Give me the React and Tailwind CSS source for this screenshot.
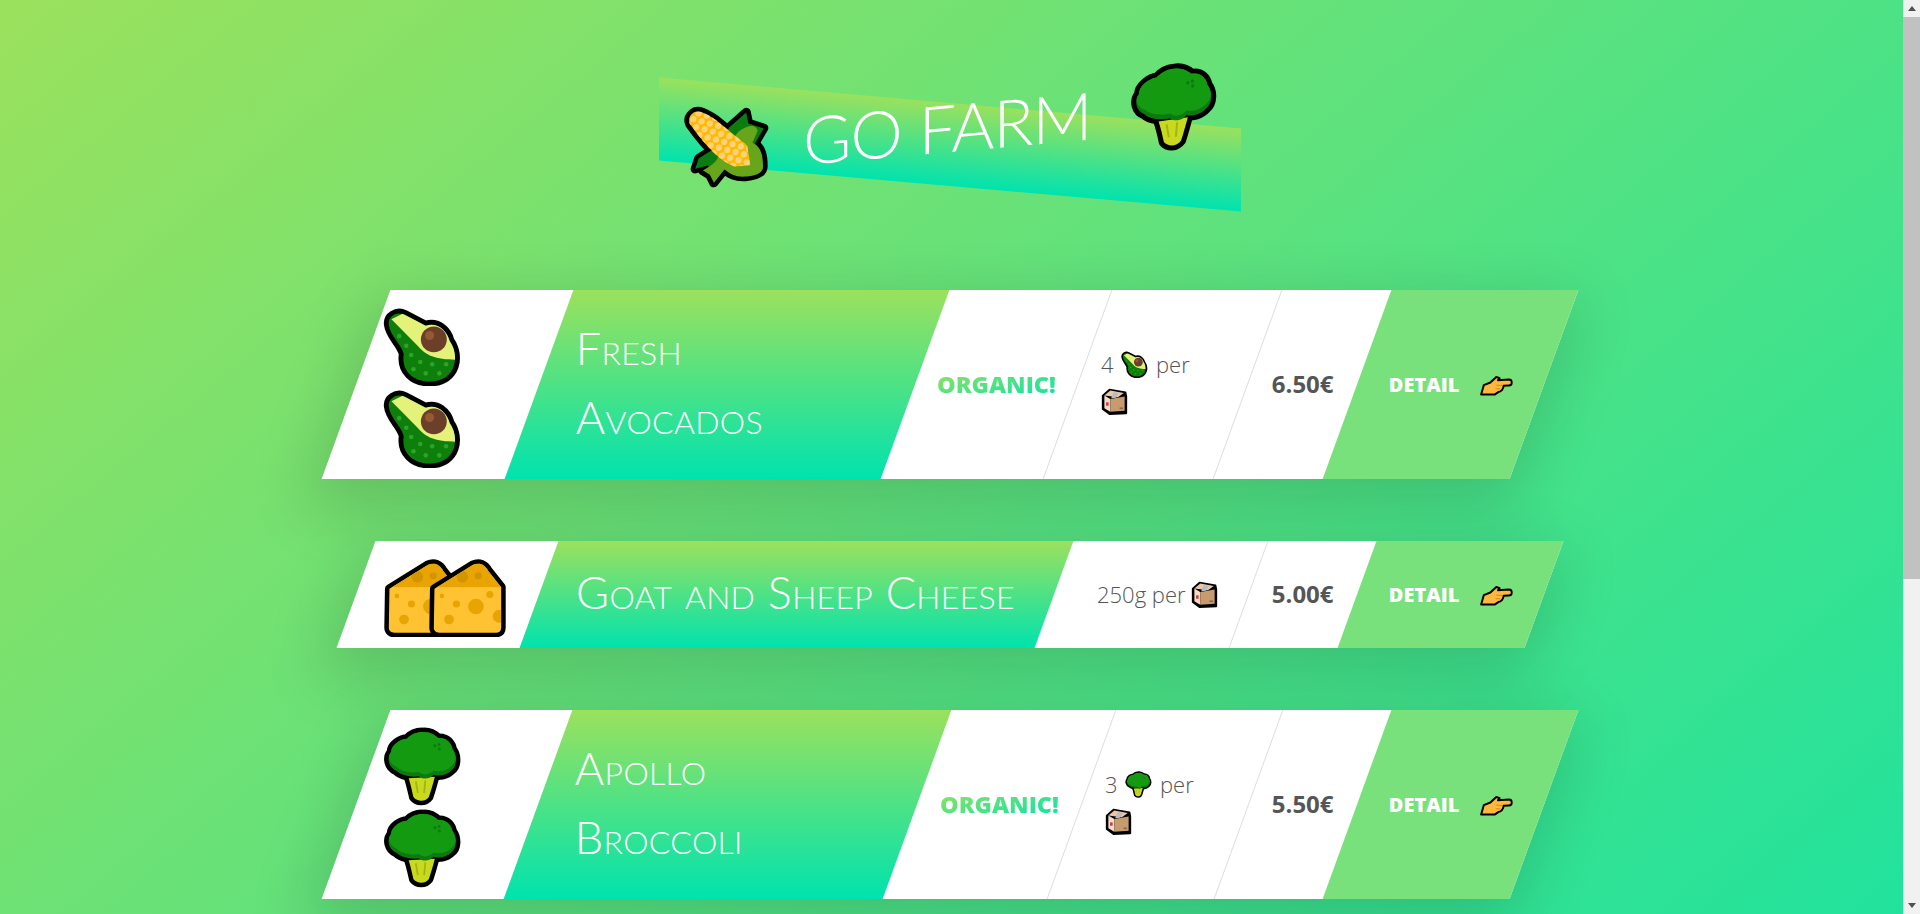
import React, { useId } from 'react';

function Avocado({ className }) {
  const id = useId();
  const shape = "M36,75 C32,50 60,32 85,44 L150,78 C185,65 215,92 224,125 C256,170 245,248 165,250 C110,252 74,215 82,165 C72,130 40,110 36,75 Z";
  return (
    <svg viewBox="18 20 244 244" className={className}>
      <clipPath id={id}><path d={shape} /></clipPath>
      <path d={shape} fill="#000" stroke="#000" strokeWidth="30" strokeLinejoin="round" />
      <path d={shape} fill="#0f7f0c" />
      <g clipPath={`url(#${id})`}>
        <path d="M44,58 L120,20 L260,60 L260,183 L245,183 C180,183 150,170 125,140 Z" fill="#e4f27a" />
        {[[68,110],[90,140],[105,168],[133,190],[170,197],[213,197],[112,212],[150,225],[192,225]].map(([x, y]) => (
          <circle key={x + '-' + y} cx={x} cy={y} r="7" fill="#2aa52a" />
        ))}
      </g>
      <circle cx="175" cy="120" r="40" fill="#6b3f2a" />
      <circle cx="162" cy="108" r="14" fill="#965a33" />
    </svg>
  );
}

function Corn({ className }) {
  const id = useId();
  const cob = "M46,92 C36,70 56,48 82,60 C95,66 110,76 125,88 L218,172 L228,232 L180,232 C140,215 95,165 46,92 Z";
  const dark = "M165,112 L215,72 L222,106 L268,125 L240,170 L120,250 L100,222 L62,228 L72,198 L120,172 Z";
  const light = "M192,128 C220,108 245,110 250,130 L234,165 C262,180 266,210 266,240 C266,262 240,265 215,265 C185,265 170,255 150,238 L118,275 L106,250 L85,235 C105,225 125,215 130,200 Z";
  const dots = [];
  for (let u = 0; u < 11; u++) {
    for (let v = -2; v <= 2; v++) {
      dots.push([56 + u * 17 + v * 16 + (u % 2 ? 8 : 0), 78 + u * 17 - v * 16 + (u % 2 ? -8 : 0)]);
    }
  }
  return (
    <svg viewBox="22 38 265 265" className={className}>
      <clipPath id={id}><path d={cob} /></clipPath>
      {[dark, light, cob].map((d) => (
        <path key={d} d={d} fill="#000" stroke="#000" strokeWidth="28" strokeLinejoin="round" />
      ))}
      <path d={dark} fill="#0b7c10" />
      <path d={light} fill="#67a51b" />
      <path d={cob} fill="#ffb900" />
      <g clipPath={`url(#${id})`}>
        {dots.map(([x, y]) => (
          <circle key={x + '-' + y} cx={x} cy={y} r="9.5" fill="#ffd27a" />
        ))}
      </g>
    </svg>
  );
}

function Broccoli({ className }) {
  const id = useId();
  const crown = "M160,50 C185,47 205,60 215,70 C245,67 260,90 263,107 C280,130 278,165 260,178 C243,196 215,198 200,193 C190,206 165,212 150,198 C130,203 90,196 75,180 C47,168 42,135 57,117 C57,92 90,72 110,72 C125,57 145,50 160,50 Z";
  const stem = "M116,205 L204,200 C196,230 190,250 184,268 C170,286 145,284 132,268 C128,250 124,230 116,205 Z";
  return (
    <svg viewBox="30 33 265 265" className={className}>
      <clipPath id={id}><path d={crown} /></clipPath>
      <path d={crown} stroke="#000" strokeWidth="30" strokeLinejoin="round" />
      <path d={stem} stroke="#000" strokeWidth="30" strokeLinejoin="round" />
      <path d={stem} fill="#c9da1e" />
      <path d="M140,215 L147,255 M172,212 L168,255" stroke="#a2b516" strokeWidth="6" />
      <path d={crown} fill="#0d7a10" />
      <g clipPath={`url(#${id})`}>
        <path d={crown} fill="#149a10" transform="translate(0,-14)" />
      </g>
      <circle cx="204" cy="96" r="5" fill="#0d7a10" />
      <circle cx="218" cy="92" r="5" fill="#0d7a10" />
      <circle cx="219" cy="107" r="5" fill="#0d7a10" />
    </svg>
  );
}

function Cheese({ className }) {
  const id = useId();
  const shape = "M172,105 L290,32 C310,22 328,30 338,50 L378,100 L378,225 C378,238 370,241 360,241 L187,241 C177,241 170,235 170,225 Z";
  return (
    <svg viewBox="152 10 244 244" className={className}>
      <clipPath id={id}><path d={shape} /></clipPath>
      <path d={shape} fill="#000" stroke="#000" strokeWidth="28" strokeLinejoin="round" />
      <path d={shape} fill="#ffc233" />
      <g clipPath={`url(#${id})`}>
        <rect x="155" y="17" width="238" height="83" fill="#e8a400" />
        <circle cx="300" cy="160" r="24" fill="#e8a400" />
        <circle cx="240" cy="152" r="11" fill="#e8a400" />
        <circle cx="217" cy="200" r="15" fill="#e8a400" />
        <circle cx="195" cy="127" r="7" fill="#e8a400" />
        <circle cx="343" cy="123" r="11" fill="#e8a400" />
        <circle cx="372" cy="190" r="20" fill="#e8a400" />
        <circle cx="258" cy="68" r="18" fill="#d29400" />
        <circle cx="307" cy="65" r="11" fill="#d29400" />
      </g>
    </svg>
  );
}

function Box({ className }) {
  return (
    <svg viewBox="0 0 32 32" className={className}>
      <path d="M2,9 L10,2 L29,5 L30,10 L30,30 L10,31 L2,25 Z" fill="#000" stroke="#000" strokeWidth="2" strokeLinejoin="round" />
      <path d="M4,9 L11,3 L27,6 L20,11 Z" fill="#e8c8a6" />
      <path d="M4,9 L11,13 L11,28 L4,24 Z" fill="#f3dcc4" />
      <path d="M11,13 L28,10 L28,27 L11,28 Z" fill="#c69b6d" />
      <path d="M15,5 L21,6 L18,11.5 L12,12 Z" fill="#b8bcc0" />
      <rect x="6" y="17" width="3" height="4" fill="#d8324a" />
      <rect x="22" y="23" width="4" height="2" fill="#8a6a48" />
    </svg>
  );
}

function Hand({ className }) {
  return (
    <svg viewBox="0 0 100 62" className={className}>
      <path d="M4,58 L12,30 L32,22 L50,5 L60,9 L55,15 L88,13 C100,13 100,31 88,31 L72,32 C72,42 64,50 56,51 L46,58 Z" fill="#ffb83d" stroke="#000" strokeWidth="6" strokeLinejoin="round" />
      <path d="M50,30 L70,31 M48,41 L62,41" stroke="#c98a1c" strokeWidth="3" />
    </svg>
  );
}

const emojis = { avocado: Avocado, cheese: Cheese, broccoli: Broccoli };

const products = [
  { name: ['Fresh', 'Avocados'], emoji: 'avocado', qty: '4', price: '6.50€', organic: true, cols: [183, 376, 163, 170, 109, 187] },
  { name: ['Goat and Sheep Cheese'], emoji: 'cheese', qty: '250g', price: '5.00€', organic: false, cols: [183, 515, 195, 108, 187] },
  { name: ['Apollo', 'Broccoli'], emoji: 'broccoli', qty: '3', price: '5.50€', organic: true, cols: [182, 379, 165, 167, 108, 187] },
];

function Card({ product }) {
  const { name, emoji, qty, price, organic, cols } = product;
  const Icon = emojis[emoji];
  const tall = name.length > 1;
  let i = 0;
  const w = () => ({ width: cols[i++] });

  return (
    <div className={`flex w-[1188px] mx-auto mb-[62px] bg-white skew-x-[-20deg] shadow-[0_20px_60px_10px_rgba(0,0,0,0.15)] ${tall ? 'h-[189px]' : 'h-[107px]'}`}>
      {/* Picture */}
      <div style={w()} className="flex items-center shrink-0">
        <div className={`skew-x-[20deg] pl-[27px] pt-[6px] flex ${tall ? 'flex-col' : ''}`}>
          {tall ? (
            <>
              <Icon className="w-[79px] h-[79px] mb-[3px]" />
              <Icon className="w-[79px] h-[79px]" />
            </>
          ) : (
            <>
              <Icon className="w-[79px] h-[79px]" />
              <Icon className="w-[79px] h-[79px] -ml-[34px]" />
            </>
          )}
        </div>
      </div>

      {/* Name */}
      <div style={w()} className="flex items-center shrink-0 bg-linear-to-b/srgb from-[#9be15d] to-[#00e3ae]">
        <h2 className="skew-x-[20deg] pl-[37px] pb-[4px] text-white text-[45px] leading-[69px] font-light tracking-[0.3px] [font-family:Lato,sans-serif] [font-variant:small-caps]">
          {name.map((line) => <div key={line}>{line}</div>)}
        </h2>
      </div>

      {/* Organic */}
      {organic && (
        <div style={w()} className="flex items-center justify-center shrink-0 border-r border-[#ddd]">
          <span className="skew-x-[20deg] inline-block text-[23.5px] font-extrabold text-transparent bg-clip-text bg-linear-to-br/srgb from-[#9be15d] to-[#00e3ae] [font-family:'Open_Sans',sans-serif]">ORGANIC!</span>
        </div>
      )}

      {/* Quantity */}
      <div style={w()} className={`flex items-center shrink-0 border-r border-[#ddd] ${tall ? 'pl-[23px]' : 'pl-[43px]'}`}>
        <p className={`skew-x-[20deg] text-[22px] font-light text-[#555] leading-[37px] [font-family:'Open_Sans',sans-serif] ${tall ? 'w-[110px] pb-[3px]' : 'whitespace-nowrap'}`}>
          {qty}{' '}
          {tall && <Icon className="inline-block w-[27px] h-[27px] align-[-5px] mx-[2px]" />}
          {tall && ' '}per{' '}
          <Box className="inline-block w-[27px] h-[27px] align-[-5px]" />
        </p>
      </div>

      {/* Price */}
      <div style={w()} className="flex items-center justify-center shrink-0">
        <span className="skew-x-[20deg] pb-[2px] text-[24px] font-bold text-[#555] [font-family:'Open_Sans',sans-serif]">{price}</span>
      </div>

      {/* Detail */}
      <div style={w()} className="flex items-center justify-center shrink-0 bg-[#79e17b]">
        <div className="skew-x-[20deg] flex items-center gap-[20px]">
          <span className="text-white text-[20px] font-extrabold [font-family:'Open_Sans',sans-serif]">DETAIL</span>
          <Hand className="w-[33px] h-[21px]" />
        </div>
      </div>
    </div>
  );
}

function Scrollbar() {
  return (
    <div className="flex flex-col w-[17px] h-full shrink-0 bg-[#f1f1f1]">
      <div className="flex items-center justify-center h-[17px] shrink-0">
        <div className="w-0 h-0 border-x-[4px] border-x-transparent border-b-[5px] border-b-[#505050]" />
      </div>
      <div className="h-[562px] shrink-0 bg-[#c1c1c1]" />
      <div className="flex-1" />
      <div className="flex items-center justify-center h-[17px] shrink-0">
        <div className="w-0 h-0 border-x-[4px] border-x-transparent border-t-[5px] border-t-[#505050]" />
      </div>
    </div>
  );
}

export default function App() {
  return (
    <div className="flex h-screen overflow-hidden">
      <div className="flex-1 min-w-0 h-[1600px] pt-[103px] pr-[3px] bg-linear-to-br/srgb from-[#9be15d] to-[#00e3ae]">
        <div className="flex items-center justify-center w-[582px] h-[83px] mx-auto mb-[104px] pb-[36px] skew-y-[5deg] bg-linear-to-b/srgb from-[#9be15d] to-[#00e3ae]">
          <h1 className="flex items-center skew-y-[-10deg] text-white text-[66px] font-light tracking-[-1px] whitespace-nowrap [font-family:Lato,sans-serif]">
            <Corn className="w-[88px] h-[88px] shrink-0" />
            <span className="ml-[33px] mr-[47px] w-[280px] text-center">GO FARM</span>
            <Broccoli className="w-[88px] h-[88px] shrink-0" />
          </h1>
        </div>
        {products.map((p) => <Card key={p.emoji} product={p} />)}
      </div>
      <Scrollbar />
    </div>
  );
}
